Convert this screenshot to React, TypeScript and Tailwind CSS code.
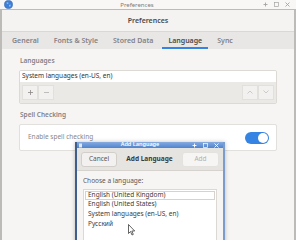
import React from "react";

const font = { fontFamily: '"Noto Sans", "DejaVu Sans", sans-serif' };

function Globe() {
  return (
    <svg width="9" height="9" viewBox="0 0 10 10">
      <circle cx="5" cy="5" r="4.5" fill="#3d7fd9" />
      <circle cx="5" cy="5" r="4.5" fill="none" stroke="#2a5fae" strokeWidth="0.6" />
      <path d="M3 2.5 L5 3 L4.5 4.5 L3 4 Z" fill="#9cc3f2" />
      <path d="M5.5 5.5 L7.5 5 L7 7.5 L5.8 7.2 Z" fill="#9cc3f2" />
    </svg>
  );
}

function WinButtons({ color, gap }: { color: string; gap: string }) {
  return (
    <div className={`flex items-center ${gap}`}>
      <svg width="5" height="5" viewBox="0 0 5 5">
        <path d="M2.5 0.5 V4.5 M0.5 2.5 H4.5" stroke={color} strokeWidth="0.9" />
      </svg>
      <svg width="5" height="5" viewBox="0 0 5 5">
        <rect x="0.5" y="0.5" width="4" height="4" fill="none" stroke={color} strokeWidth="0.7" />
      </svg>
      <svg width="5" height="5" viewBox="0 0 5 5">
        <path d="M0.5 0.5 L4.5 4.5 M4.5 0.5 L0.5 4.5" stroke={color} strokeWidth="0.9" />
      </svg>
    </div>
  );
}

function Tab({ label, active }: { label: string; active?: boolean }) {
  return (
    <div className="relative flex h-full items-center px-[6px]">
      <span className={active ? "text-[#4a4a4a]" : "text-[#838185]"}>{label}</span>
      {active && <div className="absolute bottom-0 left-0 right-0 h-[2px] bg-[#3584e4]" />}
    </div>
  );
}

function SmallBtn({ children }: { children: React.ReactNode }) {
  return (
    <div className="flex h-[15px] w-[16px] items-center justify-center border border-[#e2e0dd] bg-[#f2f1ef] text-[#9a9896]">
      {children}
    </div>
  );
}

function Cursor() {
  return (
    <svg width="8" height="12" viewBox="0 0 8 12">
      <path d="M0.5 0.5 L0.5 9.5 L2.5 7.5 L4 11 L5.3 10.4 L3.8 7 L6.7 7 Z" fill="#fff" stroke="#222" strokeWidth="0.7" />
    </svg>
  );
}

export default function App() {
  return (
    <div
      className="relative h-[240px] w-[296px] overflow-hidden bg-[#f6f5f4] text-[6.5px] leading-none text-[#2e3436]"
      style={font}
    >
      {/* title bar */}
      <div className="relative flex h-[9px] items-center justify-between bg-[#f8f7f6] pl-[4px] pr-[6px]">
        <Globe />
        <span className="absolute left-0 right-[22px] text-center text-[6px] text-[#7a7a7a]">Preferences</span>
        <WinButtons color="#a3a3a3" gap="gap-[6px]" />
      </div>

      <div className="flex h-[231px] flex-col border-x-2 border-t border-[#bdbbb8] bg-[#f6f5f4]">
        {/* header bar */}
        <div className="flex h-[21px] shrink-0 items-center justify-center bg-[#f4f3f2]">
          <span className="text-[7px] font-semibold text-[#4a4a4a]">Preferences</span>
        </div>
        {/* tabs */}
        <div className="flex h-[18px] shrink-0 items-stretch gap-[3px] border-t border-[#dad8d5] bg-[#e8e7e5] pl-[4px] text-[7px] font-semibold">
          <Tab label="General" />
          <Tab label="Fonts & Style" />
          <Tab label="Stored Data" />
          <Tab label="Language" active />
          <Tab label="Sync" />
        </div>

        {/* content */}
        <div className="flex flex-col px-[17px] pt-[9px]">
          <div className="mb-[5px] pl-[1px] text-[6.5px] font-semibold text-[#838185]">Languages</div>
          <div className="overflow-hidden rounded-[2px] border border-[#dddad6]">
            <div className="flex h-[11px] items-center bg-white pl-[2px]">System languages (en-US, en)</div>
            <div className="flex h-[21px] items-center justify-between bg-[#ebe9e6] px-[2px]">
              <div className="flex">
                <SmallBtn>
                  <svg width="5" height="5" viewBox="0 0 5 5">
                    <path d="M2.5 0 V5 M0 2.5 H5" stroke="#8a8886" strokeWidth="0.8" />
                  </svg>
                </SmallBtn>
                <SmallBtn>
                  <svg width="5" height="5" viewBox="0 0 5 5">
                    <path d="M0 2.5 H5" stroke="#b0aeac" strokeWidth="0.8" />
                  </svg>
                </SmallBtn>
              </div>
              <div className="flex">
                <SmallBtn>
                  <svg width="6" height="4" viewBox="0 0 6 4">
                    <path d="M0.5 3.5 L3 1 L5.5 3.5" fill="none" stroke="#c2c0be" strokeWidth="0.8" />
                  </svg>
                </SmallBtn>
                <SmallBtn>
                  <svg width="6" height="4" viewBox="0 0 6 4">
                    <path d="M0.5 0.5 L3 3 L5.5 0.5" fill="none" stroke="#c2c0be" strokeWidth="0.8" />
                  </svg>
                </SmallBtn>
              </div>
            </div>
          </div>

          <div className="mb-[6px] mt-[8px] pl-[1px] font-semibold text-[#838185]">Spell Checking</div>
          <div className="flex h-[27px] items-center justify-between rounded-[2px] border border-[#e2e0dd] bg-white pl-[8px] pr-[7px]">
            <span className="text-[#8a8887]">Enable spell checking</span>
            <div className="flex h-[12px] w-[24px] items-center justify-end rounded-full bg-[#3584e4] pr-[1px]">
              <div className="h-[10px] w-[10px] rounded-full bg-white" />
            </div>
          </div>
        </div>
      </div>

      {/* dialog */}
      <div className="absolute left-[75px] top-[142px] flex w-[150px] flex-col border-x-2 border-l-[#3e5f8e] border-r-[#7b9ccc] bg-[#f6f5f4] shadow-[0_0_4px_rgba(0,0,0,0.25)]">
        <div className="relative flex h-[6px] shrink-0 items-center justify-between bg-gradient-to-b from-[#86abe0] to-[#4f83cf] pl-[1px] pr-[4px]">
          <svg width="5" height="5" viewBox="0 0 5 5">
            <rect x="1" y="0.5" width="3" height="4" fill="#dfe8f5" />
          </svg>
          <span className="absolute left-0 right-[20px] text-center text-[5.5px] font-semibold text-white">Add Language</span>
          <WinButtons color="#ffffff" gap="gap-[6px]" />
        </div>
        <div className="flex h-[23px] shrink-0 items-center justify-between border-b border-[#d6d3cf] bg-[#e6e4e1] px-[4px]">
          <div className="flex h-[15px] w-[36px] items-center justify-center rounded-[3px] border border-[#d2cfcb] bg-[#f2f1ef] text-[#5a5856]">
            Cancel
          </div>
          <span className="text-[6.5px] font-bold text-[#3a3a3a]">Add Language</span>
          <div className="flex h-[15px] w-[37px] items-center justify-center rounded-[3px] border border-[#e4e2df] bg-[#f6f5f4] text-[#b2b0ae]">
            Add
          </div>
        </div>
        <div className="flex shrink-0 flex-col px-[6px] pt-[7px]">
          <div className="mb-[4px] text-[#5a5856]">Choose a language:</div>
          <div className="flex h-[80px] flex-col border border-[#dcd9d5] bg-white px-[1px] pt-[1px] text-[#3a3a3a]">
            <div className="flex h-[9px] shrink-0 items-center border border-[#d6d3cf] pl-[2px]">English (United Kingdom)</div>
            <div className="flex h-[10px] shrink-0 items-center pl-[3px]">English (United States)</div>
            <div className="flex h-[10px] shrink-0 items-center pl-[3px]">System languages (en-US, en)</div>
            <div className="flex h-[10px] shrink-0 items-center pl-[3px]">Русский</div>
          </div>
        </div>
      </div>

      <div className="absolute left-[128px] top-[224px]">
        <Cursor />
      </div>
    </div>
  );
}
